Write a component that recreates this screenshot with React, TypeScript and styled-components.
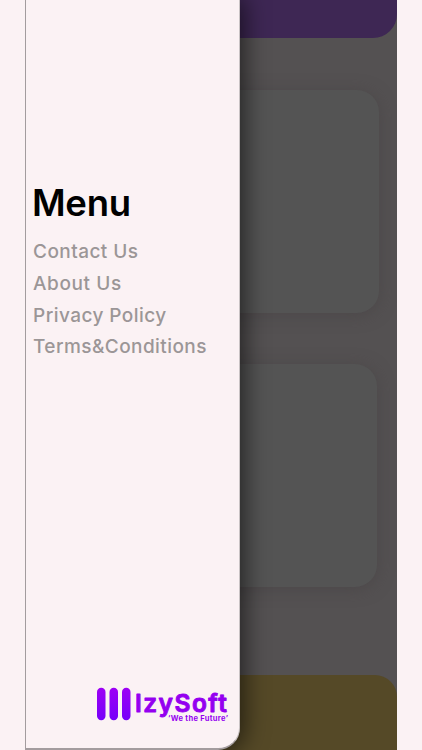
import React from 'react';
import styled, { createGlobalStyle } from 'styled-components';

const GlobalStyle = createGlobalStyle`
  * { box-sizing: border-box; }
  body { margin: 0; background: #fbf2f4; overflow: hidden; }
`;

const Page = styled.div`
  height: 750px;
  padding: 0 25px;
  background: #fbf2f4;
  font-family: Inter, "Liberation Sans", sans-serif;
`;

const Screen = styled.div`
  position: relative;
  width: 372px;
  height: 750px;
  overflow: hidden;
`;

const Backdrop = styled.div`
  display: flex;
  flex-direction: column;
  height: 100%;
  background: #545152;
`;

const TopBand = styled.div`
  flex: none;
  height: 38px;
  margin-bottom: 52px;
  background: #3e2754;
  border-radius: 0 0 24px 24px;
`;

const Card = styled.div<{ $right: number; $gap: number }>`
  flex: none;
  height: 223px;
  margin: 0 ${(p) => p.$right}px ${(p) => p.$gap}px 18px;
  background: #545454;
  border-radius: 22px;
  box-shadow: 0 2px 16px rgba(70, 65, 67, 0.6);
`;

const BottomBand = styled.div`
  flex: 1;
  background: #554927;
  border-radius: 22px 22px 0 0;
`;

const Drawer = styled.nav`
  position: absolute;
  top: 0;
  left: 0;
  width: 215px;
  height: 750px;
  display: flex;
  flex-direction: column;
  background: #fbf2f4;
  border-left: 1px solid #a39c9e;
  border-right: 1px solid #c9c3c4;
  border-bottom: 2px solid #a39c9e;
  border-radius: 0 0 22px 0;
  box-shadow: 2px 0 24px 2px rgba(0, 0, 0, 0.6);
`;

const Title = styled.h1`
  margin: 180px 0 0 6px;
  height: 46px;
  font-size: 36.5px;
  line-height: 46px;
  font-weight: 600;
  letter-spacing: -0.3px;
  color: #000;
`;

const Links = styled.ul`
  list-style: none;
  margin: 10px 0 0 7px;
  padding: 0;
`;

const Item = styled.li<{ $spacing: number }>`
  height: 31.8px;
  line-height: 32px;
  font-size: 19px;
  font-weight: 500;
  letter-spacing: ${(p) => p.$spacing}px;
  white-space: nowrap;
  color: #9b9697;
`;

const Logo = styled.div`
  display: flex;
  margin: auto 0 26px 71px;
`;

const Wordmark = styled.svg`
  display: block;
  overflow: visible;
  font-family: Inter, "Liberation Sans", sans-serif;
`;

const links = [
  { label: 'Contact Us', spacing: 0.45 },
  { label: 'About Us', spacing: 0.6 },
  { label: 'Privacy Policy', spacing: 0.45 },
  { label: 'Terms&Conditions', spacing: 0.43 },
];

export default function App() {
  return (
    <Page>
      <GlobalStyle />
      <Screen>
        <Backdrop>
          <TopBand />
          <Card $right={18} $gap={51} />
          <Card $right={20} $gap={88} />
          <BottomBand />
        </Backdrop>
        <Drawer>
          <Title>Menu</Title>
          <Links>
            {links.map((l) => (
              <Item key={l.label} $spacing={l.spacing}>{l.label}</Item>
            ))}
          </Links>
          <Logo>
            <Wordmark width="134" height="36" viewBox="0 0 134 36">
              <defs>
                <linearGradient id="bar" x1="0" y1="0" x2="0" y2="1">
                  <stop offset="0" stopColor="#9d00f5" />
                  <stop offset="1" stopColor="#7600fa" />
                </linearGradient>
              </defs>
              {[0, 12.5, 25].map((x) => (
                <rect key={x} x={x} y="1.8" width="8.5" height="32.5" rx="4.2" fill="url(#bar)" />
              ))}
              <text x="38" y="25.7" fontSize="24.5" fontWeight="600" textLength="92" fill="#9400f0" stroke="#9400f0" strokeWidth="0.9" strokeLinejoin="round">IzySoft</text>
              <text x="71" y="35" fontSize="7.5" fontWeight="700" textLength="60" fill="#9400f0">‘We the Future’</text>
            </Wordmark>
          </Logo>
        </Drawer>
      </Screen>
    </Page>
  );
}
